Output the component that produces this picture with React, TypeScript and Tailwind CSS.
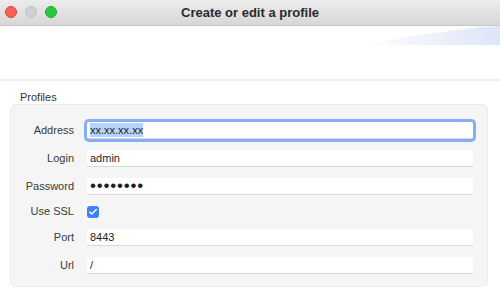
import { Check } from 'lucide-react'

const ROWS: { label: string; value?: string; kind: 'text' | 'focus' | 'password' | 'check'; h: string }[] = [
  { label: 'Address', value: 'xx.xx.xx.xx', kind: 'focus', h: 'h-[28px]' },
  { label: 'Login', value: 'admin', kind: 'text', h: 'h-[28px]' },
  { label: 'Password', value: '••••••••', kind: 'password', h: 'h-[28px]' },
  { label: 'Use SSL', kind: 'check', h: 'h-[23px]' },
  { label: 'Port', value: '8443', kind: 'text', h: 'h-[28px]' },
  { label: 'Url', value: '/', kind: 'text', h: 'h-[28px]' },
]

function Field({ kind, value }: { kind: string; value?: string }) {
  if (kind === 'check') {
    return (
      <div className="flex h-[12px] w-[12px] items-center justify-center rounded-[3px] bg-[#3a82f7]">
        <Check className="h-[10px] w-[10px] text-white" strokeWidth={3.5} />
      </div>
    )
  }
  const ring = kind === 'focus' ? 'ring-[3px] ring-[#86aff3] rounded-[2px]' : ''
  return (
    <div className={`flex h-[17px] w-[386px] items-center border-b border-[#d9d9d9] bg-white pl-[3px] ${ring}`}>
      {kind === 'focus' && <span className="bg-[#b5d3fc] text-[11px] leading-[14px] text-[#1e1e1e]">{value}</span>}
      {kind === 'text' && <span className="text-[11px] leading-[14px] text-[#1e1e1e]">{value}</span>}
      {kind === 'password' && <span className="text-[17px] leading-[14px] tracking-[0.8px] text-[#1e1e1e]">{value}</span>}
    </div>
  )
}

export default function App() {
  return (
    <div className="h-[291px] w-[500px] overflow-hidden bg-white font-['Liberation_Sans',Arial,sans-serif]">
      <div className="relative flex h-[26px] items-center justify-center border-b border-[#c6c6c6] bg-gradient-to-b from-[#ececec] to-[#d7d7d7]">
        <div className="absolute left-[5px] top-[6px] flex gap-[8px]">
          <span className="h-[12px] w-[12px] rounded-full border border-[#e0443e] bg-[#fe5f57]" />
          <span className="h-[12px] w-[12px] rounded-full border border-[#c4c4c4] bg-[#d0d0d0]" />
          <span className="h-[12px] w-[12px] rounded-full border border-[#1aab29] bg-[#28c840]" />
        </div>
        <span className="text-[13px] font-bold text-[#2a2a2a]">Create or edit a profile</span>
      </div>

      <div className="relative h-[55px] border-b-2 border-[#efefef] bg-white">
        <div className="absolute right-0 top-0 h-[19px] w-[140px] bg-gradient-to-r from-white via-[#eef2fb] to-[#dde5f8] [clip-path:polygon(0_100%,40%_50%,85%_5%,100%_0,100%_100%)]" />
      </div>

      <div className="px-[10px] pt-[10px]">
        <div className="pl-[10px] text-[11px] leading-[13px] text-[#333]">Profiles</div>
        <div className="h-[183px] w-[478px] rounded-[6px] border border-[#ececec] bg-[#f5f5f5] pt-[11px]">
          {ROWS.map((r) => (
            <div key={r.label} className={`flex items-center ${r.h}`}>
              <div className="w-[63px] text-right text-[11px] text-[#3a3a3a]">{r.label}</div>
              <div className="ml-[13px]">
                <Field kind={r.kind} value={r.value} />
              </div>
            </div>
          ))}
        </div>
      </div>
    </div>
  )
}
